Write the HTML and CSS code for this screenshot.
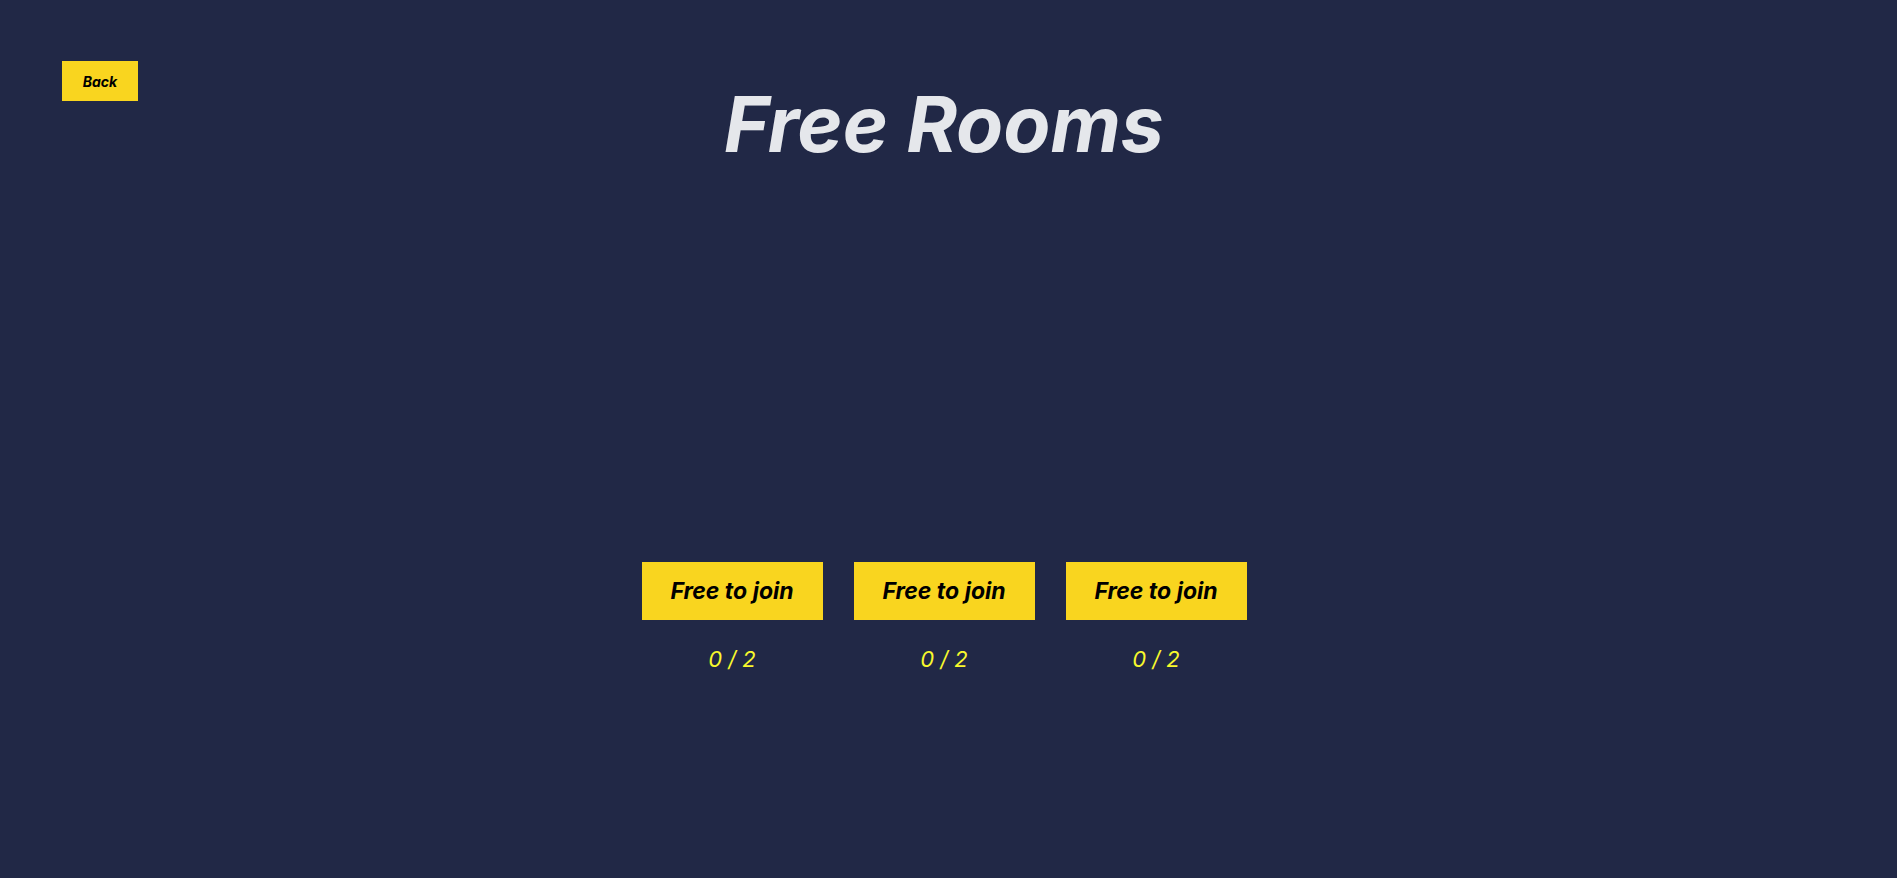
FILE: index.html
```html
<!DOCTYPE html>
<html lang="en">
<head>
<meta charset="utf-8">
<title>Free Rooms</title>
<link rel="stylesheet" href="styles.css">
</head>
<body>
<div class="page">
  <header class="header">
    <div class="header-left"><button class="back-btn">Back</button></div>
    <h1 class="title">Free Rooms</h1>
    <div class="header-right"></div>
  </header>
  <main class="rooms">
    <div class="room">
      <button class="join-btn">Free to join</button>
      <span class="count">0 / 2</span>
    </div>
    <div class="room">
      <button class="join-btn">Free to join</button>
      <span class="count">0 / 2</span>
    </div>
    <div class="room">
      <button class="join-btn">Free to join</button>
      <span class="count">0 / 2</span>
    </div>
  </main>
</div>
</body>
</html>
```
FILE: styles.css
```css
* { box-sizing: border-box; }
html, body {
  margin: 0;
  padding: 0;
  background: #212846;
  font-family: Inter, "Noto Sans", sans-serif;
}
.page {
  min-height: 100vh;
  padding: 61px 71px 0 62px;
}
.header {
  display: grid;
  grid-template-columns: 1fr auto 1fr;
  align-items: start;
}
.back-btn {
  width: 76px;
  height: 40px;
  border: none;
  background: #f9d51f;
  color: #000;
  font-family: Inter, sans-serif;
  font-size: 14px;
  font-weight: 700;
  font-style: italic;
  padding: 0;
  cursor: pointer;
}
.title {
  margin: 17px 0 0;
  font-size: 77px;
  font-weight: 700;
  font-style: italic;
  color: #e5e7eb;
  line-height: 93px;
}
.rooms {
  display: flex;
  justify-content: center;
  gap: 31px;
  margin-top: 391px;
}
.room {
  display: flex;
  flex-direction: column;
  align-items: center;
  gap: 26px;
}
.join-btn {
  width: 181px;
  height: 58px;
  border: none;
  background: #f9d51f;
  color: #000;
  font-family: Inter, sans-serif;
  font-size: 23px;
  font-weight: 700;
  font-style: italic;
  padding: 0;
  cursor: pointer;
}
.count {
  font-size: 22px;
  font-style: italic;
  color: #f8f82c;
  line-height: 27px;
}
```
